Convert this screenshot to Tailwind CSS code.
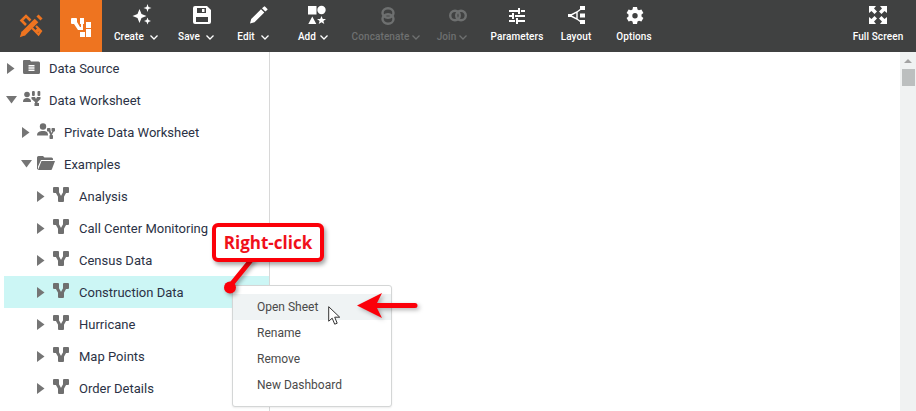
<!DOCTYPE html>
<html lang="en">

<head>
  <meta charset="UTF-8" />
  <title>Data Worksheet</title>
  <script src="https://cdn.jsdelivr.net/npm/@tailwindcss/browser@4"></script>
</head>

<body class="bg-white font-['Roboto',sans-serif] overflow-hidden">
  <div class="relative w-[916px] h-[411px] overflow-hidden flex flex-col">
    <!-- Toolbar -->
    <header class="h-[52px] shrink-0 bg-[#404141] flex text-white text-[10px] font-medium tracking-[0.1px]">
      <div class="w-[60px] flex items-center justify-center">
        <svg class="ml-[2px]" width="24" height="24" viewBox="0 0 24 24" fill="none" stroke="#ee7420">
          <path d="M7 11L2.500 6.500 7 2l4.500 4.500" stroke-width="2.600" />
          <path d="M13 14l3.500 3.500 2-2 1 1-2 2 2 2 2.500-3.500-5-5" stroke-width="2.200" />
          <path d="M4 20L17.500 6.500" stroke-width="5.200" />
          <path d="M2 22l3-1-2-2z" fill="#ee7420" stroke-width="1.500" />
          <path d="M18.500 1.500l4 4" stroke-width="3" />
        </svg>
      </div>
      <div class="w-[42px] bg-[#ee7420] flex items-center justify-center">
        <svg class="mt-[3px]" width="21" height="20" viewBox="0 0 21 20" fill="#fff">
          <rect x="0" y="0" width="6" height="6" rx="1" />
          <rect x="9" y="0" width="4" height="6" />
          <path d="M4 4h2l3 5h1v-3h2v-1 7H7L3 6z" />
          <rect x="9" y="14" width="5" height="5" />
          <rect x="15" y="4" width="5" height="6" />
          <rect x="15" y="11" width="5" height="8" />
        </svg>
      </div>

      <div class="w-[68px] flex flex-col items-center pt-[2px]">
        <svg class="ml-[11px]" width="22" height="24" viewBox="0 0 22 24" fill="#fff">
          <path d="M8.500 7l2 5 5 2-5 2-2 5-2-5-5-2 5-2z" />
          <path d="M16.500 2l1 3 3 1-3 1-1 3-1-3-3-1 3-1zM16.500 15.500l1 2.500 2.500 1-2.500 1-1 2.500-1-2.500-2.500-1 2.500-1z" />
        </svg>
        <div class="flex items-center gap-[6px] mt-[4px] leading-[14px]">Create
          <svg width="8" height="5" viewBox="0 0 8 5" fill="none" stroke="#fff" stroke-width="1.300"><path d="M.5.5L4 4 7.500.5" /></svg>
        </div>
      </div>

      <div class="w-[52px] flex flex-col items-center pt-[2px]">
        <svg class="ml-[12px]" width="18" height="24" viewBox="0 0 18 24" fill="#fff">
          <path fill-rule="evenodd" d="M2 4h12l4 4v12a2 2 0 0 1-2 2H2a2 2 0 0 1-2-2V6a2 2 0 0 1 2-2zM4 6v5h9V6zM3 15v5h12v-5z" />
          <rect x="9" y="7" width="2.500" height="3" />
        </svg>
        <div class="flex items-center gap-[6px] mt-[4px] leading-[14px]">Save
          <svg width="8" height="5" viewBox="0 0 8 5" fill="none" stroke="#fff" stroke-width="1.300"><path d="M.5.5L4 4 7.500.5" /></svg>
        </div>
      </div>

      <div class="w-[62px] flex flex-col items-center pt-[2px]">
        <svg class="ml-[12px]" width="18" height="24" viewBox="0 0 18 24" fill="#fff">
          <path d="M0 21.500l1.200-4.500L11 7.200l3.300 3.300L4.500 20.300zM12 6.200l1.800-1.500a1 1 0 0 1 1.400 0l2 2a1 1 0 0 1 0 1.400L15.300 9.500z" />
        </svg>
        <div class="flex items-center gap-[6px] mt-[4px] leading-[14px]">Edit
          <svg width="8" height="5" viewBox="0 0 8 5" fill="none" stroke="#fff" stroke-width="1.300"><path d="M.5.5L4 4 7.500.5" /></svg>
        </div>
      </div>

      <div class="w-[58px] flex flex-col items-center pt-[2px]">
        <svg class="ml-[8px]" width="18" height="24" viewBox="0 0 18 24" fill="#fff">
          <rect x="0" y="4" width="8.500" height="8.500" />
          <circle cx="13.500" cy="8" r="4.200" />
          <path d="M4.300 14.500l4 7.500H.3zM13.500 14l1.300 3H18l-2.600 2 .9 3-2.800-1.800-2.800 1.800.9-3L9 17h3.200z" />
        </svg>
        <div class="flex items-center gap-[4px] mt-[4px] leading-[14px]">Add
          <svg width="8" height="5" viewBox="0 0 8 5" fill="none" stroke="#fff" stroke-width="1.300"><path d="M.5.5L4 4 7.500.5" /></svg>
        </div>
      </div>

      <div class="w-[88px] flex flex-col items-center pt-[2px] text-[#6e7070]">
        <svg class="ml-[4px]" width="14" height="24" viewBox="0 0 14 24" fill="none" stroke="#6e7070" stroke-width="2.400">
          <ellipse cx="7" cy="11" rx="5.500" ry="4.800" />
          <ellipse cx="7" cy="17" rx="5.500" ry="4.800" />
        </svg>
        <div class="flex items-center gap-[3px] mt-[4px] leading-[14px]">Concatenate
          <svg width="8" height="5" viewBox="0 0 8 5" fill="none" stroke="#6e7070" stroke-width="1.300"><path d="M.5.5L4 4 7.500.5" /></svg>
        </div>
      </div>

      <div class="w-[44px] flex flex-col items-center pt-[2px] text-[#6e7070]">
        <svg class="ml-[12px]" width="18" height="24" viewBox="0 0 18 24" fill="none" stroke="#6e7070" stroke-width="2.400">
          <circle cx="6" cy="13.500" r="4.800" />
          <circle cx="12" cy="13.500" r="4.800" />
        </svg>
        <div class="flex items-center gap-[3px] mt-[4px] leading-[14px]">Join
          <svg width="8" height="5" viewBox="0 0 8 5" fill="none" stroke="#6e7070" stroke-width="1.300"><path d="M.5.5L4 4 7.500.5" /></svg>
        </div>
      </div>

      <div class="w-[66px] ml-[10px] flex flex-col items-center pt-[2px]">
        <svg width="16" height="24" viewBox="0 0 16 24" fill="#fff">
          <path d="M0 8h9v2H0zM12 8h4v2h-4zM9 6h2v6H9zM0 13h3v2H0zM6 13h10v2H6zM3 11h2v6H3zM0 18h6v2H0zM9 18h7v2H9zM7 16h2v6H7z" />
        </svg>
        <div class="mt-[4px] leading-[14px]">Parameters</div>
      </div>

      <div class="w-[52px] flex flex-col items-center pt-[2px]">
        <svg class="ml-[2px]" width="18" height="24" viewBox="0 0 18 24" fill="none" stroke="#fff" stroke-width="1.400">
          <path d="M2 13.500L9 10l4-3M2 13.500L9 17l4 3M9 10v7" />
          <g fill="#fff" stroke="none">
            <rect x="0" y="12" width="3.500" height="3" />
            <rect x="12" y="4" width="5" height="4" />
            <rect x="12" y="11.500" width="5" height="4" />
            <rect x="12" y="18" width="5" height="4" />
          </g>
        </svg>
        <div class="mt-[4px] leading-[14px]">Layout</div>
      </div>

      <div class="w-[64px] flex flex-col items-center pt-[2px]">
        <svg class="ml-[2px]" width="18" height="24" viewBox="0 0 18 24" fill="#fff">
          <path fill-rule="evenodd" d="M7 5h4l.5 2.500 1.500.8 2.400-.8 2 3.400-1.900 1.700v1.800l1.900 1.700-2 3.400-2.400-.8-1.500.8-.5 2.500H7l-.5-2.500-1.500-.8-2.400.8-2-3.400 1.900-1.700v-1.800L.6 10.900l2-3.400 2.400.8 1.500-.8zM9 11a2.700 2.700 0 1 0 0 5.400 2.700 2.700 0 0 0 0-5.400z" />
        </svg>
        <div class="mt-[4px] leading-[14px]">Options</div>
      </div>

      <div class="w-[64px] ml-auto mr-[6px] flex flex-col items-center pt-[2px]">
        <svg width="18" height="24" viewBox="0 0 18 24" fill="#fff">
          <path d="M0 4h7L5 6.500 8 9.500 5.500 12 2.500 9 0 11zM18 4h-7l2 2.500-3 3 2.500 2.500 3-3 2.500 2zM0 22h7l-2-2.500 3-3L5.500 14l-3 3L0 15zM18 22h-7l2-2.500-3-3 2.500-2.500 3 3 2.500-2z" />
        </svg>
        <div class="mt-[4px] leading-[14px]">Full Screen</div>
      </div>
    </header>

    <div class="flex flex-1 min-h-0">
      <!-- Tree -->
      <aside class="w-[270px] shrink-0 border-r border-[#d8d8d8] text-[13px] text-[#2b3245]">
        <div class="h-8 flex items-center pl-[7px]">
          <svg width="8" height="11" viewBox="0 0 8 11" fill="#757575"><path d="M0 0l7.500 5.500L0 11z" /></svg>
          <svg class="ml-[8px] -mt-[3px]" width="17" height="14" viewBox="0 0 17 14" fill="#6f6f6f">
            <path fill-rule="evenodd" d="M1 0h6l1 1.500h7.500a1.500 1.500 0 0 1 1.500 1.500v9.500a1.500 1.500 0 0 1-1.500 1.500h-14A1.500 1.500 0 0 1 0 12.500V1a1 1 0 0 1 1-1zM5.500 5v1.400h6V5zM5.500 7.300v1.400h6V7.300zM5.500 9.600v1.400h6V9.600z" />
          </svg>
          <span class="ml-[9px] pt-[2px]">Data Source</span>
        </div>
        <div class="h-8 flex items-center pl-[6px]">
          <svg width="11" height="8" viewBox="0 0 11 8" fill="#757575"><path d="M0 0h11L5.500 7.500z" /></svg>
          <svg class="ml-[6px] -mt-[3px]" width="18" height="15" viewBox="0 0 18 15" fill="#6f6f6f">
            <circle cx="4" cy="3.500" r="2.800" />
            <path d="M0 11c0-3 1.500-4 4-4s4 1 4 4z" />
            <rect x="9" y="0" width="2.800" height="5" rx="1" />
            <rect x="14.500" y="0" width="2.800" height="5" rx="1" />
            <path d="M8.500 6h3.500l1 2 1-2h3.500v2l-3 3v1h1.500v3h-4.500v-3H12v-1L8.500 8z" />
          </svg>
          <span class="ml-[8px] pt-[2px]">Data Worksheet</span>
        </div>
        <div class="h-8 flex items-center pl-[22px]">
          <svg width="8" height="11" viewBox="0 0 8 11" fill="#757575"><path d="M0 0l7.500 5.500L0 11z" /></svg>
          <svg class="ml-[7px] -mt-[3px]" width="18" height="16" viewBox="0 0 18 16" fill="#6f6f6f">
            <circle cx="6" cy="3.500" r="3.200" />
            <path d="M0 12.500c0-3.500 2.500-4.500 6-4.500s5 1 5 4.500z" />
            <rect x="10" y="5" width="3.500" height="3.500" rx=".8" />
            <rect x="14.500" y="5" width="3.500" height="3.500" rx=".8" />
            <rect x="12.500" y="12" width="3.500" height="4" rx=".8" />
            <path d="M11.500 8l2 4.500h1L17 8l-1.500-.5-1 2.500-1-2.500z" />
          </svg>
          <span class="ml-[9px] pt-[2px]">Private Data Worksheet</span>
        </div>
        <div class="h-8 flex items-center pl-[21px]">
          <svg width="11" height="8" viewBox="0 0 11 8" fill="#757575"><path d="M0 0h11L5.500 7.500z" /></svg>
          <svg class="ml-[5px] -mt-[2px]" width="18" height="14" viewBox="0 0 18 14" fill="#6f6f6f">
            <path d="M0 1.500A1.500 1.500 0 0 1 1.500 0H6l1.500 1.500h7A1.500 1.500 0 0 1 16 3v1H4L1 10.500V13.500A1.500 1.500 0 0 1 0 12.500z" />
            <path d="M4.500 5H18l-3 8a1.500 1.500 0 0 1-1 1H1z" />
          </svg>
          <span class="ml-[9px] pt-[2px]">Examples</span>
        </div>

        <div class="h-8 flex items-center pl-[37px]">
          <svg width="8" height="11" viewBox="0 0 8 11" fill="#757575"><path d="M0 0l7.500 5.500L0 11z" /></svg>
          <svg class="ml-[8px] -mt-[3px]" width="16" height="15" viewBox="0 0 16 15" fill="#6f6f6f"><rect x="0" y="0" width="6" height="6" rx="1" /><rect x="10" y="0" width="6" height="6" rx="1" /><rect x="5" y="9" width="6" height="6" rx="1" /><path d="M3 3l5 9 5-9" fill="none" stroke="#6f6f6f" stroke-width="3" /></svg>
          <span class="ml-[10px] pt-[2px]">Analysis</span>
        </div>
        <div class="h-8 flex items-center pl-[37px]">
          <svg width="8" height="11" viewBox="0 0 8 11" fill="#757575"><path d="M0 0l7.500 5.500L0 11z" /></svg>
          <svg class="ml-[8px] -mt-[3px]" width="16" height="15" viewBox="0 0 16 15" fill="#6f6f6f"><rect x="0" y="0" width="6" height="6" rx="1" /><rect x="10" y="0" width="6" height="6" rx="1" /><rect x="5" y="9" width="6" height="6" rx="1" /><path d="M3 3l5 9 5-9" fill="none" stroke="#6f6f6f" stroke-width="3" /></svg>
          <span class="ml-[10px] pt-[2px]">Call Center Monitoring</span>
        </div>
        <div class="h-8 flex items-center pl-[37px]">
          <svg width="8" height="11" viewBox="0 0 8 11" fill="#757575"><path d="M0 0l7.500 5.500L0 11z" /></svg>
          <svg class="ml-[8px] -mt-[3px]" width="16" height="15" viewBox="0 0 16 15" fill="#6f6f6f"><rect x="0" y="0" width="6" height="6" rx="1" /><rect x="10" y="0" width="6" height="6" rx="1" /><rect x="5" y="9" width="6" height="6" rx="1" /><path d="M3 3l5 9 5-9" fill="none" stroke="#6f6f6f" stroke-width="3" /></svg>
          <span class="ml-[10px] pt-[2px]">Census Data</span>
        </div>
        <div class="h-8 flex items-center ml-[4px] pl-[33px] bg-[#ccf6f5]">
          <svg width="8" height="11" viewBox="0 0 8 11" fill="#757575"><path d="M0 0l7.500 5.500L0 11z" /></svg>
          <svg class="ml-[8px] -mt-[3px]" width="16" height="15" viewBox="0 0 16 15" fill="#6f6f6f"><rect x="0" y="0" width="6" height="6" rx="1" /><rect x="10" y="0" width="6" height="6" rx="1" /><rect x="5" y="9" width="6" height="6" rx="1" /><path d="M3 3l5 9 5-9" fill="none" stroke="#6f6f6f" stroke-width="3" /></svg>
          <span class="ml-[10px] pt-[2px]">Construction Data</span>
        </div>
        <div class="h-8 flex items-center pl-[37px]">
          <svg width="8" height="11" viewBox="0 0 8 11" fill="#757575"><path d="M0 0l7.500 5.500L0 11z" /></svg>
          <svg class="ml-[8px] -mt-[3px]" width="16" height="15" viewBox="0 0 16 15" fill="#6f6f6f"><rect x="0" y="0" width="6" height="6" rx="1" /><rect x="10" y="0" width="6" height="6" rx="1" /><rect x="5" y="9" width="6" height="6" rx="1" /><path d="M3 3l5 9 5-9" fill="none" stroke="#6f6f6f" stroke-width="3" /></svg>
          <span class="ml-[10px] pt-[2px]">Hurricane</span>
        </div>
        <div class="h-8 flex items-center pl-[37px]">
          <svg width="8" height="11" viewBox="0 0 8 11" fill="#757575"><path d="M0 0l7.500 5.500L0 11z" /></svg>
          <svg class="ml-[8px] -mt-[3px]" width="16" height="15" viewBox="0 0 16 15" fill="#6f6f6f"><rect x="0" y="0" width="6" height="6" rx="1" /><rect x="10" y="0" width="6" height="6" rx="1" /><rect x="5" y="9" width="6" height="6" rx="1" /><path d="M3 3l5 9 5-9" fill="none" stroke="#6f6f6f" stroke-width="3" /></svg>
          <span class="ml-[10px] pt-[2px]">Map Points</span>
        </div>
        <div class="h-8 flex items-center pl-[37px]">
          <svg width="8" height="11" viewBox="0 0 8 11" fill="#757575"><path d="M0 0l7.500 5.500L0 11z" /></svg>
          <svg class="ml-[8px] -mt-[3px]" width="16" height="15" viewBox="0 0 16 15" fill="#6f6f6f"><rect x="0" y="0" width="6" height="6" rx="1" /><rect x="10" y="0" width="6" height="6" rx="1" /><rect x="5" y="9" width="6" height="6" rx="1" /><path d="M3 3l5 9 5-9" fill="none" stroke="#6f6f6f" stroke-width="3" /></svg>
          <span class="ml-[10px] pt-[2px]">Order Details</span>
        </div>
      </aside>

      <main class="flex-1"></main>

      <!-- Scrollbar -->
      <div class="w-4 shrink-0 bg-[#f0f2f2] flex flex-col items-center">
        <svg class="mt-[7px]" width="8" height="4" viewBox="0 0 8 4" fill="#a3a3a3"><path d="M4 0l4 4H0z" /></svg>
        <div class="w-[13px] h-[17px] mt-[6px] bg-[#bcbfbf]"></div>
      </div>
    </div>

    <!-- Context menu -->
    <div class="absolute left-[232px] top-[285px] w-[160px] h-[122px] bg-white border border-[#d4d6d6] rounded-[3px] pt-[8px] text-[12px] text-[#4a4a4a] shadow-[0_1px_2px_rgba(0,0,0,0.08)]">
      <div class="h-[26px] flex items-center pl-[24px] bg-[#eff3f4]">Open Sheet</div>
      <div class="h-[26px] flex items-center pl-[24px]">Rename</div>
      <div class="h-[26px] flex items-center pl-[24px]">Remove</div>
      <div class="h-[26px] flex items-center pl-[24px]">New Dashboard</div>
    </div>

    <!-- Callout leader -->
    <svg class="absolute left-[220px] top-[255px] drop-shadow-[2px_2px_2px_rgba(0,0,0,0.35)]" width="45" height="45" viewBox="0 0 45 45" fill="#fb0009">
      <path d="M32 4L10 31" stroke="#fb0009" stroke-width="5" stroke-linecap="round" />
      <circle cx="10" cy="32.500" r="6" />
    </svg>
    <div class="absolute left-[212px] top-[223px] w-[112px] h-[39px] bg-white border-4 border-[#fb0009] rounded-[6px] flex items-center justify-center font-['Open_Sans',sans-serif] font-bold text-[17px] text-[#f0101a] shadow-[2px_3px_4px_rgba(0,0,0,0.35)]">Right-click</div>

    <!-- Arrow to Open Sheet -->
    <svg class="absolute left-[355px] top-[292px] drop-shadow-[2px_2px_2px_rgba(0,0,0,0.3)]" width="66" height="28" viewBox="0 0 66 28" fill="#fb0009">
      <path d="M2 13.500L27 1l-5 10h38a2.500 2.500 0 0 1 0 5H22l5 10z" />
    </svg>

    <!-- Mouse cursor -->
    <svg class="absolute left-[328px] top-[306px]" width="14" height="20" viewBox="0 0 14 20" fill="#fff" stroke="#333" stroke-width="1">
      <path d="M.7.7v14.500l3.500-3 2.500 6 2.500-1-2.500-6h5z" />
    </svg>
  </div>
</body>

</html>
